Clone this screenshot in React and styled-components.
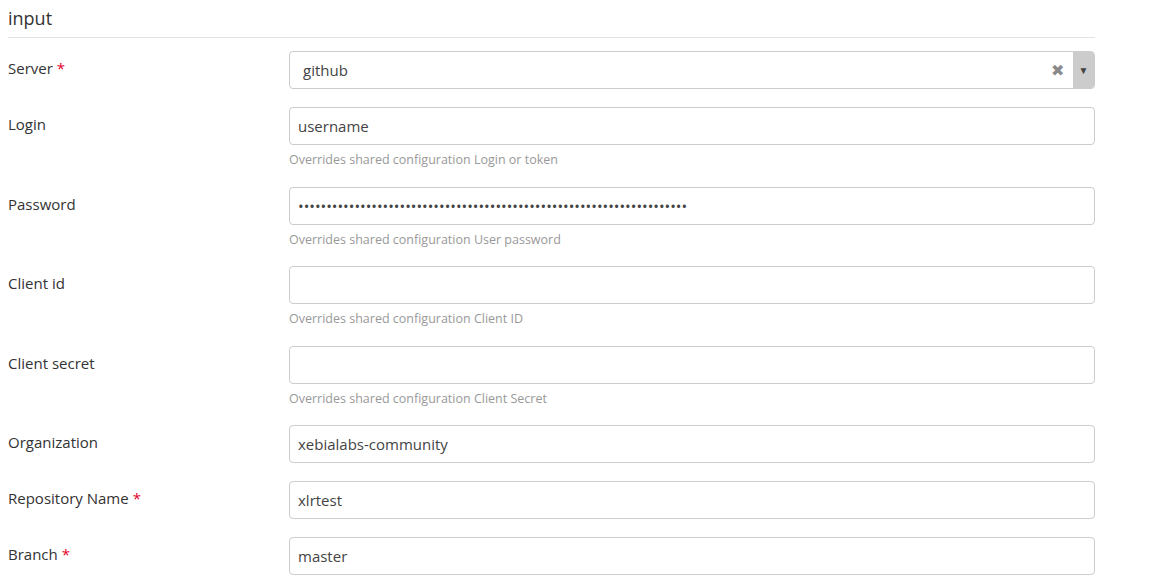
import React from "react";
import styled, { createGlobalStyle } from "styled-components";

const Global = createGlobalStyle`
  html, body { margin: 0; padding: 0; background: #fff; }
  body { font-family: "Open Sans", "Liberation Sans", sans-serif; color: #333; }
  * { box-sizing: border-box; }
`;

const Page = styled.div`
  padding: 0 56px 0 8px;
  width: 1151px;
`;

const Title = styled.h2`
  margin: 0;
  padding-top: 6px;
  font-size: 18px;
  font-weight: 400;
  line-height: 24px;
  color: #333;
  padding-bottom: 7px;
  border-bottom: 1px solid #e3e3e3;
  width: 1087px;
`;

const Form = styled.div`
  display: flex;
  flex-direction: column;
  padding-top: 13px;
`;

const Row = styled.div`
  display: grid;
  grid-template-columns: 281px 806px;
  margin-bottom: ${(p) => (p.$help ? "18.5px" : "18px")};
`;

const Label = styled.label`
  font-size: 15px;
  line-height: 20px;
  padding-top: 7px;
  color: #333;
`;

const Req = styled.span`
  color: #e4002b;
  margin-left: 4px;
`;

const Field = styled.div`
  display: flex;
  flex-direction: column;
`;

const Input = styled.input`
  width: 100%;
  height: 38px;
  border: 1px solid #ccc;
  border-radius: 4px;
  padding: 0 8px;
  font-family: "Open Sans", "Liberation Sans", sans-serif;
  font-size: 15px;
  color: #444;
  background: #fff;
  outline: none;
`;

const Help = styled.div`
  margin-top: 7px;
  font-size: 12.5px;
  line-height: 16px;
  color: #999;
`;

const Select = styled.div`
  display: flex;
  height: 38px;
  border: 1px solid #ccc;
  border-radius: 4px;
  overflow: hidden;
`;

const SelectValue = styled.div`
  flex: 1;
  display: flex;
  align-items: center;
  padding-left: 13px;
  font-size: 15px;
  color: #444;
`;

const Clear = styled.div`
  width: 30px;
  display: flex;
  align-items: center;
  justify-content: center;
  color: #8a8a8a;
  font-size: 16px;
  padding-right: 2px;
`;

const Arrow = styled.div`
  width: 21px;
  background: #ccc;
  display: flex;
  align-items: center;
  justify-content: center;
  color: #444;
  font-size: 10px;
`;

const fields = [
  { label: "Login", value: "username", help: "Overrides shared configuration Login or token" },
  { label: "Password", value: "•".repeat(69), help: "Overrides shared configuration User password" },
  { label: "Client id", value: "", help: "Overrides shared configuration Client ID" },
  { label: "Client secret", value: "", help: "Overrides shared configuration Client Secret" },
  { label: "Organization", value: "xebialabs-community" },
  { label: "Repository Name", value: "xlrtest", req: true },
  { label: "Branch", value: "master", req: true },
];

export default function App() {
  return (
    <>
      <Global />
      <Page>
        <Title>input</Title>
        <Form>
          <Row>
            <Label>
              Server<Req>*</Req>
            </Label>
            <Select>
              <SelectValue>github</SelectValue>
              <Clear>✖</Clear>
              <Arrow>▼</Arrow>
            </Select>
          </Row>
          {fields.map((f) => (
            <Row key={f.label} $help={!!f.help}>
              <Label>
                {f.label}
                {f.req && <Req>*</Req>}
              </Label>
              <Field>
                <Input readOnly value={f.value} />
                {f.help && <Help>{f.help}</Help>}
              </Field>
            </Row>
          ))}
        </Form>
      </Page>
    </>
  );
}
